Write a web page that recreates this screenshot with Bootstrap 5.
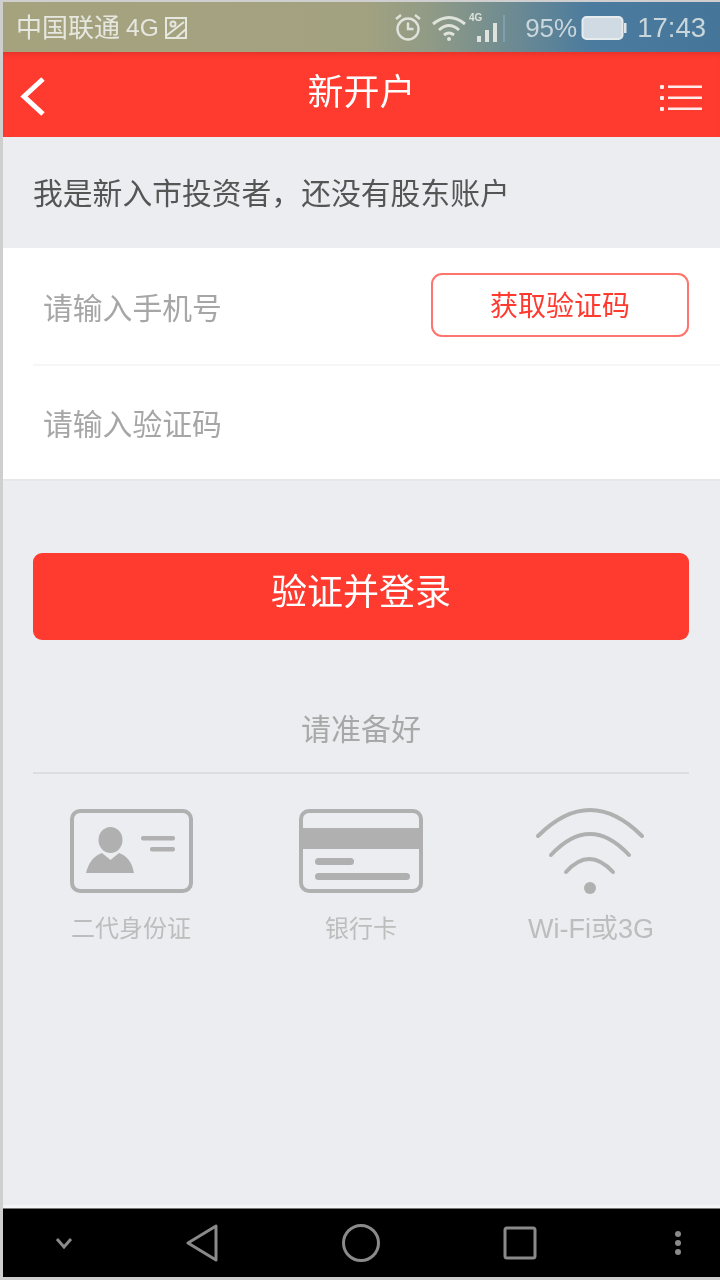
<!DOCTYPE html>
<html lang="zh-CN">
<head>
  <meta charset="UTF-8" />
  <meta name="viewport" content="width=device-width, initial-scale=1" />
  <title>新开户</title>
  <link href="https://cdn.jsdelivr.net/npm/bootstrap@5.3.3/dist/css/bootstrap.min.css" rel="stylesheet" />
  <style>
    body {
      width: 720px;
      height: 1280px;
      overflow: hidden;
      background: #fff;
      font-family: "Liberation Sans", "Noto Sans CJK SC", sans-serif;
    }
    /* the reference is a soft, upscaled capture */
    .phone {
      height: 1280px;
      padding: 2px 0 3px 3px;
      background: #cfcfcf;
      filter: blur(.6px);
    }
    .screen { height: 100%; background: #ecedf1; }

    /* status bar */
    .status-bar {
      height: 50px;
      padding: 2px 14px 0 13px;
      background: linear-gradient(90deg, #a5a27e 0%, #a3a280 50%, #8f9a86 60%, #4b7b9e 82%, #457699 100%);
      color: #e6e8e0;
      font-size: 26px;
    }
    .status-bar svg { display: block; }
    .carrier-net { margin-left: 6px; font-size: 24.500px; }
    .alarm-icon { margin-right: 1px; }
    .batt-pct { margin-left: 16px; color: #c9d6dc; }
    .clock { margin-left: 10px; font-size: 27.500px; color: #c9d6dc; }

    /* red header */
    .top-bar {
      height: 85px;
      background: #ff3a2f;
      color: #fff;
      box-shadow: inset 0 6px 6px -5px #d9302a;
    }
    .top-bar h1 { font-size: 36px; font-weight: 400; margin: 0 0 3px; }
    .back-icon { left: 16px; top: 24px; }
    .menu-icon { right: 18px; top: 31px; }

    .new-hint {
      height: 111px;
      padding: 4px 0 0 30px;
      color: #555;
      font-size: 29.800px;
    }

    /* form */
    .form-block { background: #fff; height: 233px; border-bottom: 2px solid #e6e7ea; }
    .form-line { height: 116px; margin-left: 30px; padding-right: 31px; }
    .form-line + .form-line { height: 115px; border-top: 2px solid #f6f6f6; }
    .phone-input {
      border: 0;
      padding: 6px 0 0 10px;
      font-size: 29.800px;
      color: #555;
      box-shadow: none !important;
    }
    .phone-input::placeholder { color: #a6a6a6; opacity: 1; }
    .code-btn {
      width: 258px;
      height: 64px;
      flex: none;
      margin-bottom: 2px;
      padding: 4px 0 0;
      font-size: 28px;
      color: #ff3a2f;
      background: #fff;
      border: 2px solid #ff746c;
      border-radius: 11px;
    }

    .login-btn {
      display: block;
      width: 656px;
      height: 87px;
      margin: 72px 0 0 30px;
      padding: 0 0 8px;
      background: #ff3a2f;
      border: 0;
      border-radius: 9px;
      color: #fff;
      font-size: 36px;
    }

    /* prepare section */
    .prep-box { margin: 0 31px 0 30px; }
    .prep-title {
      padding: 68px 0 20px;
      line-height: 44px;
      text-align: center;
      font-size: 30px;
      color: #a8a8a8;
      border-bottom: 2px solid #dcdde0;
    }
    .prep-row { margin: 0 -17px; padding-top: 35px; }
    .prep-item { text-align: center; color: #bdbdbd; font-size: 24px; line-height: 30px; }
    .prep-item svg { display: block; margin: 0 auto 21px; overflow: visible; }
    .wifi-label { font-size: 27px; }

    /* android keys */
    .nav-keys { height: 69px; background: #000; padding-left: 51px; border-top: 1px solid #777; box-shadow: 0 -3px 0 #f4f5f7; }
    .nav-keys svg { display: block; }
    .key-back { margin-left: 112px; }
    .key-home { margin-left: 124px; }
    .key-recent { margin-left: 123px; }
    .key-more { margin-left: 137px; }
  </style>
</head>
<body>
  <div class="phone">
    <div class="screen d-flex flex-column">

      <!-- status bar -->
      <div class="status-bar d-flex align-items-center flex-shrink-0">
        <span>中国联通</span>
        <span class="carrier-net">4G</span>
        <svg class="ms-1" width="26" height="26" viewBox="0 0 26 26" fill="none" stroke="#e6e8e0" stroke-width="2">
          <rect x="3" y="3" width="20" height="20"/>
          <circle cx="10" cy="9" r="2.500"/>
          <path d="M3 21 L21 7 M13 23 L23 14"/>
        </svg>
        <svg class="ms-auto alarm-icon" width="28" height="30" viewBox="0 0 28 30" fill="none" stroke="#dfe3dc" stroke-width="2.400">
          <circle cx="14" cy="16" r="10.500"/>
          <path d="M14 9.500 V16 H19.500"/>
          <path d="M2 6 L7 2 M26 6 L21 2"/>
        </svg>
        <svg class="ms-2" width="36" height="28" viewBox="0 0 36 28" fill="none" stroke="#dfe3dc" stroke-width="3">
          <path d="M2 10 Q18 -3 34 10"/>
          <path d="M8 16 Q18 7 28 16"/>
          <path d="M13 21 Q18 17 23 21"/>
          <circle cx="18" cy="25" r="2" fill="#dfe3dc" stroke="none"/>
        </svg>
        <svg width="42" height="32" viewBox="0 0 42 32">
          <text x="2" y="9" font-size="10" font-weight="700" fill="#dfe3dc" font-family="Liberation Sans">4G</text>
          <rect x="10" y="24" width="4" height="6" fill="#dfe3dc"/>
          <rect x="18" y="18" width="4" height="12" fill="#dfe3dc"/>
          <rect x="26" y="11" width="4" height="19" fill="#dfe3dc"/>
          <rect x="36" y="3" width="2" height="27" fill="#7f9fb0"/>
        </svg>
        <span class="batt-pct">95%</span>
        <svg class="ms-1" width="46" height="26" viewBox="0 0 46 26">
          <rect x="1.500" y="2" width="40" height="22" rx="4" fill="#cfdae2" stroke="#e6ebee" stroke-width="2"/>
          <rect x="43" y="8" width="2.500" height="10" fill="#dfe5e8"/>
        </svg>
        <span class="clock">17:43</span>
      </div>

      <!-- header -->
      <div class="top-bar position-relative d-flex align-items-center justify-content-center flex-shrink-0">
        <svg class="back-icon position-absolute" width="28" height="42" viewBox="0 0 28 42" fill="none" stroke="#fff" stroke-width="5">
          <path d="M24 3 L5 20.500 L24 38"/>
        </svg>
        <h1>新开户</h1>
        <svg class="menu-icon position-absolute" width="42" height="28" viewBox="0 0 42 28" fill="#fff" opacity=".9">
          <rect x="0" y="2" width="4" height="4" rx="1"/><rect x="8" y="2.500" width="34" height="2.500"/>
          <rect x="0" y="13" width="4" height="4" rx="1"/><rect x="8" y="13.500" width="34" height="2.500"/>
          <rect x="0" y="24" width="4" height="4" rx="1"/><rect x="8" y="24.500" width="34" height="2.500"/>
        </svg>
      </div>

      <div class="new-hint d-flex align-items-center flex-shrink-0">我是新入市投资者，还没有股东账户</div>

      <!-- form -->
      <form class="form-block flex-shrink-0">
        <div class="form-line d-flex align-items-center">
          <input class="form-control phone-input" type="tel" placeholder="请输入手机号" />
          <button type="button" class="btn code-btn">获取验证码</button>
        </div>
        <div class="form-line d-flex align-items-center">
          <input class="form-control phone-input" type="text" placeholder="请输入验证码" />
        </div>
      </form>

      <button type="button" class="btn login-btn flex-shrink-0">验证并登录</button>

      <!-- what to prepare -->
      <div class="prep-box flex-grow-1">
        <div class="prep-title">请准备好</div>
        <div class="row g-0 prep-row">
          <div class="col-4 prep-item">
            <svg width="124" height="84" viewBox="0 0 124 84">
              <rect x="3" y="2" width="119" height="80" rx="8" fill="none" stroke="#b0b0b0" stroke-width="4"/>
              <ellipse cx="41.500" cy="31" rx="12" ry="13" fill="#b0b0b0"/>
              <path d="M17 64 Q21 48 33 44 L41.500 51 L50 44 Q62 48 65 64 Z" fill="#b0b0b0"/>
              <rect x="72" y="27" width="34" height="4.500" rx="2" fill="#b0b0b0"/>
              <rect x="81" y="38" width="25" height="4.500" rx="2" fill="#b0b0b0"/>
            </svg>
            二代身份证
          </div>
          <div class="col-4 prep-item">
            <svg width="124" height="84" viewBox="0 0 124 84">
              <rect x="2" y="2" width="120" height="80" rx="8" fill="none" stroke="#b0b0b0" stroke-width="4"/>
              <rect x="2" y="19" width="120" height="21" fill="#b0b0b0"/>
              <rect x="16" y="49" width="39" height="7" rx="3.500" fill="#b0b0b0"/>
              <rect x="16" y="64" width="95" height="7" rx="3.500" fill="#b0b0b0"/>
            </svg>
            银行卡
          </div>
          <div class="col-4 prep-item">
            <svg width="110" height="84" viewBox="0 0 110 84" fill="none" stroke="#b0b0b0" stroke-width="4" stroke-linecap="round">
              <path d="M2 27 Q54 -25 106 27"/>
              <path d="M15 46 Q54 4 93 46"/>
              <path d="M30 63 Q53 37 77 63"/>
              <circle cx="54" cy="79" r="6" fill="#b0b0b0" stroke="none"/>
            </svg>
            <span class="wifi-label">Wi-Fi或3G</span>
          </div>
        </div>
      </div>

      <!-- android keys -->
      <div class="nav-keys d-flex align-items-center flex-shrink-0">
        <svg width="20" height="14" viewBox="0 0 20 14" fill="none" stroke="#8a8a8a" stroke-width="3"><path d="M3 3 L10 11 L17 3"/></svg>
        <svg class="key-back" width="32" height="38" viewBox="0 0 32 38" fill="none" stroke="#8a8a8a" stroke-width="3" stroke-linejoin="round"><path d="M30 2 V36 L2 19 Z"/></svg>
        <svg class="key-home" width="38" height="38" viewBox="0 0 38 38" fill="none" stroke="#8a8a8a" stroke-width="3"><circle cx="19" cy="19" r="17.500"/></svg>
        <svg class="key-recent" width="34" height="34" viewBox="0 0 34 34" fill="none" stroke="#8a8a8a" stroke-width="3"><rect x="2" y="2" width="30" height="30" rx="2"/></svg>
        <svg class="key-more" width="8" height="26" viewBox="0 0 8 26" fill="#8a8a8a"><circle cx="4" cy="4" r="3"/><circle cx="4" cy="13" r="3"/><circle cx="4" cy="22" r="3"/></svg>
      </div>
    </div>
  </div>
  <script src="https://cdn.jsdelivr.net/npm/bootstrap@5.3.3/dist/js/bootstrap.bundle.min.js"></script>
</body>
</html>
